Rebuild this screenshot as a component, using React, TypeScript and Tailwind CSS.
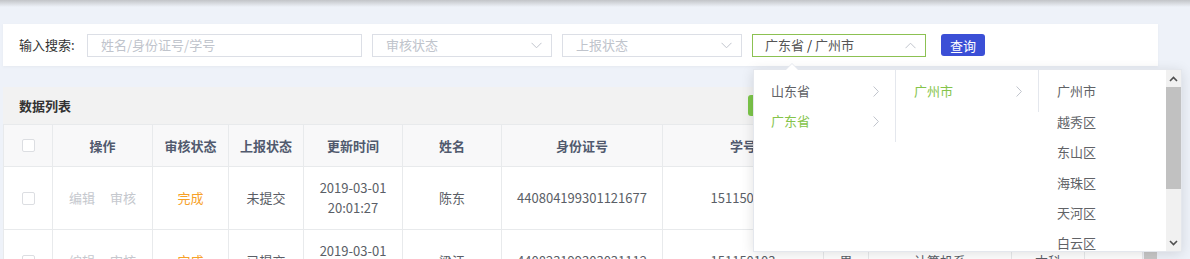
import { Fragment } from "react";

const cols = "grid-cols-[49px_100px_76px_75px_99px_99px_161px_161px_45px_143px_73px_58px]";

// columns past 学号 sit under the open cascader, so their titles stay blank
const headers = ["", "操作", "审核状态", "上报状态", "更新时间", "姓名", "身份证号", "学号", "", "", "", ""];

const rows = [
  {
    audit: "完成",
    report: "未提交",
    date: "2019-03-01",
    time: "20:01:27",
    name: "陈东",
    idNo: "440804199301121677",
    stuNo: "151150102",
    sex: "男",
    college: "计算机系",
    level: "本科",
  },
  {
    audit: "完成",
    report: "已提交",
    date: "2019-03-01",
    time: "20:01:27",
    name: "梁江",
    idNo: "440823199303031112",
    stuNo: "151150103",
    sex: "男",
    college: "计算机系",
    level: "本科",
  },
];

const provinces = [
  { label: "山东省", active: false },
  { label: "广东省", active: true },
];

const districts = ["广州市", "越秀区", "东山区", "海珠区", "天河区", "白云区"];

function ChevronDown({ up = false }: { up?: boolean }) {
  return (
    <svg width="11" height="7" viewBox="0 0 11 7" className={up ? "rotate-180" : ""}>
      <polyline points="0.5,0.8 5.5,5.8 10.5,0.8" fill="none" stroke="#c0c4cc" strokeWidth="1" />
    </svg>
  );
}

function ChevronRight() {
  return (
    <svg width="6" height="11" viewBox="0 0 6 11">
      <polyline points="0.6,0.5 5.4,5.5 0.6,10.5" fill="none" stroke="#c0c4cc" strokeWidth="1" />
    </svg>
  );
}

function Checkbox() {
  return <span className="block w-[13px] h-[13px] rounded-[2px] border border-[#dcdee2] bg-white" />;
}

export default function App() {
  return (
    <div className="relative w-[1190px] h-[259px] overflow-hidden bg-[#eef2f9] text-[13px] text-[#5a5e66] font-['Noto_Sans_CJK_SC','Noto_Sans',sans-serif]">
      <div className="h-[7px] bg-linear-to-b from-[#c2c4c8] to-[#eef2f9]" />

      {/* search bar */}
      <div className="ml-[3px] mt-[17px] w-[1155px] h-[42px] bg-white flex items-center pl-[16px] shadow-[0_1px_3px_rgba(0,0,0,0.04)]">
        <span className="w-[68px] text-[#333]">输入搜索:</span>
        <div className="w-[275px] h-[23px] border border-[#dcdfe6] pl-[13px] flex items-center text-[#c0c4cc]">
          姓名/身份证号/学号
        </div>
        <div className="ml-[10px] w-[180px] h-[23px] border border-[#dcdfe6] pl-[13px] pr-[9px] flex items-center justify-between text-[#c0c4cc]">
          <span>审核状态</span>
          <ChevronDown />
        </div>
        <div className="ml-[10px] w-[180px] h-[23px] border border-[#dcdfe6] pl-[13px] pr-[9px] flex items-center justify-between text-[#c0c4cc]">
          <span>上报状态</span>
          <ChevronDown />
        </div>
        <div className="ml-[10px] w-[174px] h-[23px] border border-[#8cc152] pl-[12px] pr-[9px] flex items-center justify-between text-[#555]">
          <span>
            广东省 <span className="text-[#222]">/</span> 广州市
          </span>
          <ChevronDown up />
        </div>
        <button className="ml-[15px] w-[44px] h-[22px] rounded-[3px] bg-[#3b4fd6] text-white text-[13px] leading-none">
          查询
        </button>
      </div>

      {/* data list */}
      <div className="ml-[3px] mt-[21px] w-[1155px]">
        <div className="h-[37px] bg-[#f2f2f2] flex items-center justify-between pl-[16px] pr-[16px]">
          <span className="font-bold text-[#333]">数据列表</span>
          <div className="w-[394px] flex items-center gap-[8px]">
            <span className="block w-[64px] h-[21px] rounded-[3px] bg-[#7cc64a]" />
            <span className="block w-[64px] h-[21px] rounded-[3px] bg-[#3b4fd6]" />
          </div>
        </div>

        <div className="flex">
          <div className={`grid ${cols} border-l border-t border-[#e8eaec]`}>
            {headers.map((h, i) => (
              <div
                key={i}
                className="h-[42px] bg-[#f8f8f9] border-r border-b border-[#e8eaec] flex items-center justify-center font-bold text-[#515a6e]"
              >
                {i === 0 ? <Checkbox /> : h}
              </div>
            ))}
            {rows.map((r, i) => (
              <Fragment key={i}>
                <div className="h-[63px] bg-white border-r border-b border-[#e8eaec] flex items-center justify-center">
                  <Checkbox />
                </div>
                <div className="h-[63px] bg-white border-r border-b border-[#e8eaec] flex items-center justify-center gap-[15px] text-[#c5c8ce]">
                  <span>编辑</span>
                  <span>审核</span>
                </div>
                <div className="h-[63px] bg-white border-r border-b border-[#e8eaec] flex items-center justify-center text-[#f7a128]">
                  {r.audit}
                </div>
                <div className="h-[63px] bg-white border-r border-b border-[#e8eaec] flex items-center justify-center">
                  {r.report}
                </div>
                <div className="h-[63px] bg-white border-r border-b border-[#e8eaec] flex flex-col items-center justify-center leading-[20px]">
                  <span>{r.date}</span>
                  <span>{r.time}</span>
                </div>
                <div className="h-[63px] bg-white border-r border-b border-[#e8eaec] flex items-center justify-center">
                  {r.name}
                </div>
                <div className="h-[63px] bg-white border-r border-b border-[#e8eaec] flex items-center justify-center">
                  {r.idNo}
                </div>
                <div className="h-[63px] bg-white border-r border-b border-[#e8eaec] flex items-center justify-center">
                  {r.stuNo}
                </div>
                <div className="h-[63px] bg-white border-r border-b border-[#e8eaec] flex items-center justify-center">
                  {i === 0 ? "" : r.sex}
                </div>
                <div className="h-[63px] bg-white border-r border-b border-[#e8eaec] flex items-center justify-center">
                  {i === 0 ? "" : r.college}
                </div>
                <div className="h-[63px] bg-white border-r border-b border-[#e8eaec] flex items-center justify-center">
                  {i === 0 ? "" : r.level}
                </div>
                <div className="h-[63px] bg-white border-r border-b border-[#e8eaec]" />
              </Fragment>
            ))}
          </div>
          <div className="w-[16px] flex flex-col">
            <div className="h-[42px] bg-[#f8f8f9]" />
            <div className="h-[85px] bg-white" />
            <div className="flex-1 mx-[1px] bg-[#c8c8c8]" />
          </div>
        </div>
      </div>

      {/* cascader dropdown */}
      <div className="absolute left-[753px] top-[69px] w-[429px] h-[183px] bg-white border border-[#e4e7ed] shadow-[0_2px_12px_rgba(0,0,0,0.12)] flex">
        <span className="absolute left-[31px] -top-[7px] w-0 h-0 border-x-[7px] border-x-transparent border-b-[7px] border-b-[#e4e7ed]" />
        <span className="absolute left-[32px] -top-[6px] w-0 h-0 border-x-[6px] border-x-transparent border-b-[6px] border-b-white" />
        <div className="w-[142px] self-start py-[6px] border-r border-[#e4e7ed]">
          {provinces.map((p) => (
            <div key={p.label} className="h-[30px] pl-[17px] pr-[16px] flex items-center justify-between">
              <span className={p.active ? "text-[#85c44a]" : "text-[#606266]"}>{p.label}</span>
              <ChevronRight />
            </div>
          ))}
        </div>
        <div className="w-[143px] self-start py-[6px] border-r border-[#e4e7ed]">
          <div className="h-[30px] pl-[18px] pr-[16px] flex items-center justify-between">
            <span className="text-[#85c44a]">广州市</span>
            <ChevronRight />
          </div>
        </div>
        <div className="flex-1 pt-[6px] overflow-hidden">
          {districts.map((d) => (
            <div key={d} className="h-[30.4px] pl-[18px] flex items-center text-[#606266]">
              {d}
            </div>
          ))}
        </div>
        <div className="w-[15px] h-full bg-[#f1f1f1] flex flex-col">
          <div className="h-[17px] flex items-center justify-center">
            <svg width="9" height="6" viewBox="0 0 9 6">
              <polyline points="1,5 4.5,1.5 8,5" fill="none" stroke="#505050" strokeWidth="1.6" />
            </svg>
          </div>
          <div className="h-[102px] bg-[#c1c1c1]" />
          <div className="flex-1" />
          <div className="h-[17px] flex items-center justify-center">
            <svg width="9" height="6" viewBox="0 0 9 6">
              <polyline points="1,1 4.5,4.5 8,1" fill="none" stroke="#505050" strokeWidth="1.6" />
            </svg>
          </div>
        </div>
      </div>
    </div>
  );
}
